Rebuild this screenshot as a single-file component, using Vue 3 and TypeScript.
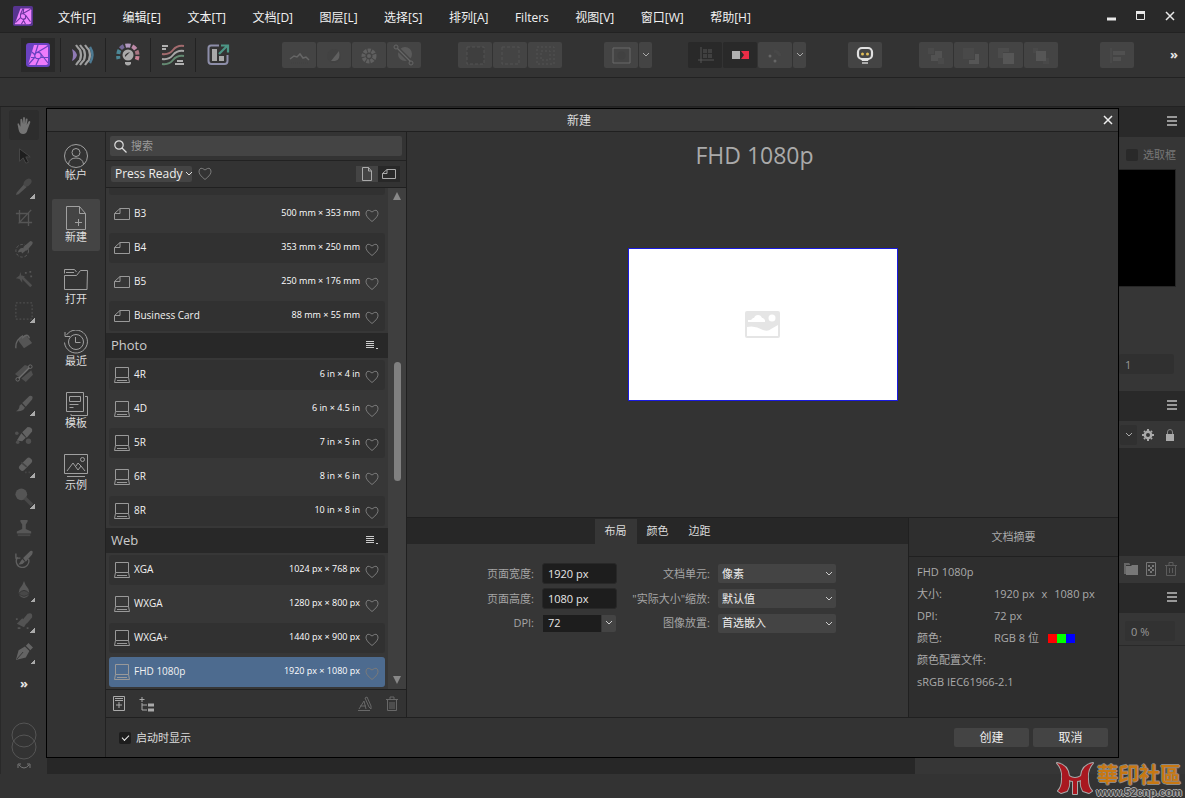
<script setup lang="ts">
import { ref } from 'vue'

interface Preset { name: string; size: string; shape: 'paper' | 'device' }
interface Section { title: string; items: Preset[] }

const menus = ['文件[F]', '编辑[E]', '文本[T]', '文档[D]', '图层[L]', '选择[S]', '排列[A]', 'Filters', '视图[V]', '窗口[W]', '帮助[H]']

const paper = (name: string, size: string): Preset => ({ name, size, shape: 'paper' })
const device = (name: string, size: string): Preset => ({ name, size, shape: 'device' })

const sections: Section[] = [
  { title: '', items: [paper('B3', '500 mm × 353 mm'), paper('B4', '353 mm × 250 mm'), paper('B5', '250 mm × 176 mm'), paper('Business Card', '88 mm × 55 mm')] },
  { title: 'Photo', items: [device('4R', '6 in × 4 in'), device('4D', '6 in × 4.5 in'), device('5R', '7 in × 5 in'), device('6R', '8 in × 6 in'), device('8R', '10 in × 8 in')] },
  { title: 'Web', items: [device('XGA', '1024 px × 768 px'), device('WXGA', '1280 px × 800 px'), device('WXGA+', '1440 px × 900 px'), device('FHD 1080p', '1920 px × 1080 px')] },
]
const shaded = (s: number, i: number) => (s === 0 ? i % 2 === 1 : i % 2 === 0)
const selected = ref('FHD 1080p')
const showAtStart = ref(true)
const marquee = ref(false)
const search = ref('')
const pageWidth = ref('1920 px')
const pageHeight = ref('1080 px')
const dpi = ref('72')
const opacity = ref('0 %')
const level = ref('1')

const personas: string[] = [
  '<rect width="24" height="24" rx="3" fill="#6a42c1"/><path d="M8 2h12q2 0 2 2v16q0 2-2 2H2z" fill="#ee7bfb"/><g stroke="#6a42c1" stroke-width="1.200" fill="none"><circle cx="12" cy="12.500" r="3.200"/><path d="M9 11.500 12 2M11.500 9.300 22 3M15 11l7 9M14.500 14.500H22M13 15.500 10 22M9 14 2 22M9.500 14.500H5M6 9l3 3"/></g>',
  '<path d="M1 6q4 2 5 6-1 4-5 6 2-6 0-12" fill="#8f7ab5"/><g fill="none" stroke="#a0a0a0" stroke-width="2.200"><path d="M5 2q2 3 4 5 2 5 0 10-2 2-4 5M9 2q2 3 4 5 2 5 0 10-2 2-4 5M14 2q2 3 4 5 2 5 0 10-2 2-4 5"/></g><path d="M19 4q5 8 0 16" fill="none" stroke="#4d7b94" stroke-width="2.400"/>',
  '<g fill="none" stroke-width="4"><path d="M2.500 16a10 10 0 0 1-.3-3" stroke="#4c8796"/><path d="M2.300 11a10 10 0 0 1 1.200-4" stroke="#4c8796"/><path d="M4.500 5.600a10 10 0 0 1 3.300-2.500" stroke="#766a99"/><path d="M9.500 2.800a10 10 0 0 1 5 0" stroke="#b39ac0"/><path d="M16.200 3.300a10 10 0 0 1 3.500 3" stroke="#be8aa8"/><path d="M20.500 7.600a10 10 0 0 1 1 4" stroke="#a97683"/><path d="M21.500 13.200a10 10 0 0 1-.8 3.500" stroke="#c98295"/></g><circle cx="12" cy="12" r="5.500" fill="#aaa"/><path d="M9 14q-1-3 5-5z" fill="#333"/><path d="M9 19h6v2q-3 3-6 0z" fill="#aaa"/>',
  '<g fill="none" stroke-width="2"><path d="M1 3h6M1 6h4M16 18h6M14 21h9" stroke="#b0b0b0"/><path d="M1 11q7 1 11-4 4-5 11-4" stroke="#a36b6e"/><path d="M1 16q7 1 11-4 4-5 11-4" stroke="#a8a8a8"/><path d="M1 21q7 1 11-4 4-5 11-4" stroke="#648a72"/></g>',
  '<path d="M13 2.500H5q-2.500 0-2.500 2.500v13q0 3 3 3h13q3 0 3-3v-6" fill="none" stroke="#8d8ea9" stroke-width="2"/><path d="M6 6h5v12H6zM13 13h5v5h-5z" fill="#a8a8a8"/><path d="m13 11 8-8M15 2.500h7v7" fill="none" stroke="#4c9585" stroke-width="2.200"/>',
]

const tools: { art: string; more?: boolean }[] = [
  { art: '<path d="M3 10q-1-2 1-2l2 4V4q1-2 2 0l1 5V2q1-2 2 0v7l1-6q2-1 2 1l-1 6 2-4q2-1 2 1l-3 8q-1 5-5 5-4 0-5-5z" fill="#747474"/>' },
  { art: '<path d="M5 2v14l4-4 3 6 3-1-3-6h5z" fill="#1e1e1e" stroke="#484848"/>' },
  { art: '<path d="m2 16 8-9 3 3-9 8-3 1z" fill="#555"/><ellipse cx="14" cy="5" rx="5" ry="3.500" transform="rotate(-45 14 5)" fill="#484848"/>', more: true },
  { art: '<path d="M5 1v14h14M1 5h14v14M4 16 18 1" stroke="#555" fill="none" stroke-width="1.500"/>' },
  { art: '<circle cx="8" cy="12" r="7" fill="none" stroke="#606060" stroke-dasharray="3 2"/><path d="m7 13-4 1q2-6 6-5l5 1-6 5zM9 8l8-7q4 0 2 4l-6 7z" fill="#5a5a5a"/>' },
  { art: '<path d="m7 6 11 11" stroke="#505050" stroke-width="3"/><path d="M6 1l1 4 4 1-3 3v4L5 9 1 8l4-3z" fill="#505050"/><path d="M11 2h2M16 1h2M17 6h2" stroke="#555" stroke-width="2"/>' },
  { art: '<path d="M1 1h18v18H1z" fill="none" stroke="#585858" stroke-dasharray="2 2"/>', more: true },
  { art: '<path d="m5 6 7-4 7 9-9 6-6-8z" fill="#555"/><path d="M1 17Q0 8 9 3M8 6q6-7 8 0" fill="none" stroke="#646464" stroke-width="1.500"/>' },
  { art: '<path d="m0 11 11-10 6 2-12 12zM7 16l11-9 2 5-8 8z" fill="#4f4f4f"/><path d="M4 16 17 3" stroke="#707070" stroke-width="1.500"/><g fill="#333" stroke="#707070"><circle cx="3" cy="17" r="2"/><circle cx="17" cy="3" r="2"/></g>' },
  { art: '<path d="m8 9 8-8q5-1 3 4l-7 8zM7 10l4 4q-2 5-10 4 4-2 4-6z" fill="#5b5b5b"/>', more: true },
  { art: '<path d="m8 7 6-6q6 0 5 5l-6 7zM7 8l5 5-4 4-6-1z" fill="#626262"/><g fill="#505050"><circle cx="2" cy="8" r="2"/><circle cx="3" cy="18" r="2"/><circle cx="15" cy="17" r="3"/></g>' },
  { art: '<rect x="3" y="5" width="17" height="7" rx="3" transform="rotate(-45 11 8)" fill="#606060"/><path d="m7 6 6 5M11 17h2M15 17h2" stroke="#444" stroke-width="2"/>', more: true },
  { art: '<circle cx="7" cy="7" r="6.500" fill="#555"/><path d="m11 11 8 8" stroke="#484848" stroke-width="4"/>', more: true },
  { art: '<path d="M6 1h8v2l-2 3v5l6 3v2H2v-2l6-3V6L6 3z" fill="#575757"/><path d="M3 18h14" stroke="#484848" stroke-width="2"/>' },
  { art: '<path d="M3 8a7 7 0 1 0 12 2M1 4v5h5" stroke="#606060" fill="none" stroke-width="1.500"/><path d="m9 9 8-8q4-1 2 4l-7 8zM8 10l3 3q-3 4-7 3z" fill="#606060"/>' },
  { art: '<path d="M10 0q-1 4-5 9-3 9 5 10 8-1 5-10-4-5-5-9" fill="#585858"/><path d="M4 14q6-7 12 0-6 6-12 0" fill="#484848" stroke="#333"/>', more: true },
  { art: '<path d="m9 8 5-6q6-2 5 4l-6 7zM8 7l5 5-3 5-8-4z" fill="#535353"/><path d="M1 8h2M3 18h3M13 18h2" stroke="#555" stroke-width="2"/>', more: true },
  { art: '<path d="m1 19 3-11 7-4 5 5-4 7zM12 3l3-3 5 5-3 3z" fill="#646464"/><path d="m2 18 7-8" stroke="#333"/>', more: true },
]

const fx: { icons: string[]; near?: boolean; split?: number[]; dark?: number[] }[] = [
  { icons: [
    '<path d="M3 16l4-3 3 1 3-3 3 4 3-1 3 3" fill="none" stroke="#666" stroke-width="1.500"/><path d="M4 20h17" stroke="#404040" stroke-dasharray="1 1"/>',
    '<circle cx="12" cy="13" r="7" fill="#424242"/><path d="M9 18 17 8q2 9-4 10z" fill="#606060"/>',
    '<circle cx="12" cy="13" r="5.500" fill="none" stroke="#606060" stroke-width="4" stroke-dasharray="3 1"/><circle cx="12" cy="13" r="2" fill="#606060"/>',
    '<circle cx="13" cy="11" r="7" fill="#5a5a5a"/><path d="m5 5 14 14" stroke="#444" stroke-width="4"/><path d="m5 5 14 14" stroke="#666" stroke-width="1.300"/><circle cx="4" cy="4" r="2" fill="#444" stroke="#666"/><circle cx="19" cy="20" r="2" fill="#444" stroke="#666"/>'] },
  { near: true, icons: [
    '<path d="M4 4h17v17H4z" fill="#3f3f3f" stroke="#525252" stroke-dasharray="3 2"/>',
    '<path d="M4 4h17v17H4z" fill="none" stroke="#525252" stroke-dasharray="3 2"/>',
    '<path d="M4 4h17v17H4zM8 8h9v9H8z" fill="none" stroke="#525252" stroke-dasharray="2 2"/>'] },
  { split: [0], icons: ['<path d="M4 5h17v15H4z" fill="none" stroke="#686868"/><circle cx="12.500" cy="12.500" r="4" fill="#414141"/>'] },
  { near: true, split: [2], dark: [0, 1], icons: [
    '<path d="M8 4v16M5 17h16" stroke="#555" fill="none"/><path d="M10 6h9v9h-9z" fill="#404040"/><path d="M14.500 6v9M10 10.500h9" stroke="#2b2b2b"/>',
    '<path d="M4 8h8v8H4z" fill="#b0b0b0"/><path d="M13 8h8v8h-8l3-4z" fill="#e92d46"/>',
    '<g fill="#666"><circle cx="7" cy="13" r="1.500"/><circle cx="12" cy="18" r="1.500"/></g><path d="M11 8q5 1 6 5" stroke="#484848" fill="none" stroke-width="3"/>'] },
  { icons: ['<rect x="5" y="5" width="14" height="11" rx="4" fill="#444" stroke="#e1e1e1" stroke-width="2.200"/><path d="M8 16h8l-1 2H9z" fill="#e1e1e1"/><path d="M9 20h6" stroke="#aaa" stroke-width="2"/><g fill="#e0bd58"><circle cx="9.500" cy="11" r="1.500"/><circle cx="14.500" cy="11" r="1.500"/></g>'] },
  { near: true, icons: [
    '<path d="M4 5h6v6H4zM14 15h6v6h-6z" fill="#4a4a4a"/><path d="M11 8h7v7h-4v3H7v-6h4z" fill="#525252"/>',
    '<path d="M4 5h11v11H4z" fill="#494949"/><path d="M16 11h4v10H10v-4h6z" fill="#565656"/>',
    '<path d="M4 5h11v4H9v6H4z" fill="#4c4c4c"/><path d="M9 10h11v11H9z" fill="#565656"/>',
    '<path d="M4 5h5v5H4zM14 15h6v6h-6z" fill="#494949"/><path d="M7 8h10v10H7z" fill="#565656"/>'] },
  { icons: ['<path d="M6 5v15" stroke="#4e4e4e"/><path d="M8 8h12v4H8zM8 14h8v4H8z" fill="#505050"/>'] },
]

const nav: { label: string; art: string }[] = [
  { label: '帐户', art: '<circle cx="12" cy="12" r="11.500"/><circle cx="12" cy="8.500" r="4"/><path d="M4.500 20q1-6 7.500-6t7.500 6"/>' },
  { label: '新建', art: '<path d="M2.500.5h13l6 7v16h-19zM15.500.5v7h6M14.500 13v7M11 16.500h7"/>' },
  { label: '打开', art: '<path d="M.5 21.500V7.500h12l4-5h7l-.5 19zM.5 5.500v-4h10l2 2.500M2 4.500h8"/>' },
  { label: '最近', art: '<path d="M2.500 5A11.500 11.500 0 1 1 .5 12.500M1 2v4.500h5"/><circle cx="12" cy="12" r="7.500"/><path d="M11.500 7v5.500h5"/>' },
  { label: '模板', art: '<path d="M2.500.5h17v19h-17zM5.500 4.500h11v5h-11zM5.500 12.500h9M5.500 15.500h4M21 4.500h2.500v19H7V22"/>' },
  { label: '示例', art: '<path d="M.5.500h23v19H.5zM3 17l6-8 5 7 3-4 4 5M3 22.500h18M12 12l2-3 3 3"/><circle cx="18.500" cy="5.500" r="2"/>' },
]
const tabs = ['布局', '颜色', '边距']
const activeTab = ref('布局')
</script>

<template>
  <div class="app">
    <header class="menubar">
      <svg class="logo" viewBox="0 0 24 24"><rect width="24" height="24" rx="2" fill="#57348f" /><path d="M9 3h11q2 0 2 2v14q0 3-3 3H2z" fill="#ef83ff" /><path d="M9 10l3-1 3 2v4l-3 1-3-2zM12 9l9-5M9 10l3-7M15 11l6 8M12 16l3 6M9 14l-6 6M14 15l-4 7M13 3l-1 6" fill="none" stroke="#6b36a0" stroke-width="1.300" /></svg>
      <nav class="menus"><button v-for="m in menus" :key="m">{{ m }}</button></nav>
      <div class="window-controls">
        <button aria-label="Minimize"><svg viewBox="0 0 10 10"><path d="M0 8h9" stroke-width="3" /></svg></button>
        <button aria-label="Maximize"><svg viewBox="0 0 10 10"><path d="M.5 1.500h8v7h-8zM0 1.500h9" stroke-width="1" /><path d="M0 1.500h9" stroke-width="3" /></svg></button>
        <button aria-label="Close"><svg viewBox="0 0 10 10"><path d="m1 1 8 8m0-8-8 8" stroke-width="1.500" /></svg></button>
      </div>
    </header>

    <div class="toolbar">
      <div class="personas">
        <button v-for="(p, i) in personas" :key="i" :class="{ on: i === 0 }" :aria-label="`Persona ${i + 1}`"><svg viewBox="0 0 24 24" v-html="p" /></button>
      </div>
      <div v-for="(g, gi) in fx" :key="gi" class="group" :class="{ near: g.near }">
        <template v-for="(ic, i) in g.icons" :key="i">
          <button class="tb" :class="{ dark: g.dark?.includes(i) }" :aria-label="`Command ${gi + 1}.${i + 1}`"><svg viewBox="0 0 24 24" v-html="ic" /></button>
          <button v-if="g.split?.includes(i)" class="tb drop" aria-label="Options"><svg viewBox="0 0 8 6"><path d="m1 1 3 3 3-3" /></svg></button>
        </template>
      </div>
      <button class="overflow">»</button>
    </div>
    <div class="context-bar"></div>

    <div class="workspace">
      <aside class="tools">
        <button v-for="(t, i) in tools" :key="i" :class="{ on: i === 0 }" :aria-label="`Tool ${i + 1}`">
          <svg viewBox="0 0 20 20" v-html="t.art" />
          <span v-if="t.more" class="corner"></span>
        </button>
        <button class="more">»</button>
        <svg class="swatches" viewBox="0 0 26 50"><g fill="none" stroke="#555"><circle cx="13" cy="13" r="12" /><circle cx="13" cy="25" r="12" /></g><path d="M8 43q5 6 10 0M7 46v-4h3M19 46v-4h-3" fill="none" stroke="#777" /></svg>
      </aside>
      <main class="canvas"></main>
      <aside class="panels">
        <div class="panel-head"><i></i></div>
        <label class="marquee"><input v-model="marquee" type="checkbox" />选取框</label>
        <div class="navigator"></div>
        <div class="level"><input v-model="level" aria-label="Level" /></div>
        <div class="panel-head"><i></i></div>
        <div class="layer-bar">
          <button class="blend" aria-label="Blend mode"><svg viewBox="0 0 8 6"><path d="m1 1 3 3 3-3" fill="none" stroke="#aaa" /></svg></button>
          <svg viewBox="0 0 12 12"><circle cx="6" cy="6" r="3.200" fill="none" stroke="#aaa" stroke-width="2.400" /><path d="M6 0v2M6 10v2M0 6h2M10 6h2M2 2l1 1M9 9l1 1M10 2 9 3M3 9l-1 1" stroke="#aaa" stroke-width="2" /></svg>
          <svg class="lock" viewBox="0 0 12 12"><path d="M2 5h8v7H2z" fill="#aaa" /><path d="M3.500 5V3q0-2.500 2.500-2.500T8.500 3v2" fill="none" stroke="#888" /></svg>
        </div>
        <div class="layers"></div>
        <div class="layer-actions">
          <svg viewBox="0 0 14 14"><path d="M0 1h5l1 1v1H2v9H0z" fill="#666" /><path d="M2 4h5l1-1h6v10H2z" fill="#777" /></svg>
          <svg viewBox="0 0 14 14"><path d="M2.500.5h9v13h-9z" fill="none" stroke="#777" /><path d="M4 3h2v2H4zM8 3h2v2H8zM6 5h2v2H6zM4 7h2v2H4zM8 7h2v2H8zM6 9h2v2H6z" fill="#777" /></svg>
          <svg viewBox="0 0 14 14"><path d="M2.500 3.500h9v10h-9zM1 3.500h12M5 3V.5h4V3M5.500 6v5M8.500 6v5" fill="none" stroke="#5c5c5c" /></svg>
        </div>
        <div class="panel-head"><i></i></div>
        <div class="opacity"><input v-model="opacity" aria-label="Opacity" /></div>
      </aside>

      <section class="dialog" role="dialog" aria-label="新建">
        <header class="dialog-head"><h1>新建</h1><button aria-label="Close dialog"><svg viewBox="0 0 10 10"><path d="m1 1 8 8m0-8-8 8" /></svg></button></header>
        <div class="dialog-body">
          <nav class="side-nav">
            <button v-for="(n, i) in nav" :key="n.label" :class="{ on: i === 1 }"><svg viewBox="0 0 24 24" v-html="n.art" />{{ n.label }}</button>
          </nav>
          <div class="dialog-main">
            <div class="upper">
              <div class="presets">
                <div class="search">
                  <label><svg viewBox="0 0 13 13"><circle cx="5" cy="5" r="4.200" /><path d="m8 8 4.500 4.500" /></svg><input v-model="search" placeholder="搜索" aria-label="搜索" /></label>
                </div>
                <div class="filters">
                  <button class="category">Press Ready<svg viewBox="0 0 8 6"><path d="m1 1 3 3 3-3" /></svg></button>
                  <svg class="heart" viewBox="0 0 14 14"><path d="M7 12.500Q.5 7.500 1 4 2-1 7 3q5-4 6 1 .5 3.500-6 8.500z" /></svg>
                  <div class="orient">
                    <button aria-label="Portrait"><svg viewBox="0 0 14 14"><path d="M2.500.5h6l3 3.500v9.500h-9zM8.500.5V4h3" /></svg></button>
                    <button class="on" aria-label="Landscape"><svg viewBox="0 0 14 14"><path d="M.5 6.500 5 2.500h8.500v9H.5zM.5 6.500H5v-4" /></svg></button>
                  </div>
                </div>
                <div class="list-wrap">
                  <div class="list">
                    <div class="row shade" aria-hidden="true"></div>
                    <template v-for="(s, si) in sections" :key="si">
                      <h2 v-if="s.title">{{ s.title }}<svg viewBox="0 0 14 10"><path d="M1 1.500h8M1 3.500h8M1 5.500h8M1 7.500h8M11 8.500h2" /></svg></h2>
                      <button v-for="(p, i) in s.items" :key="p.name" class="row" :class="{ shade: shaded(si, i), selected: p.name === selected }" @click="selected = p.name">
                        <svg v-if="p.shape === 'paper'" class="shape" viewBox="0 0 16 16"><path d="M.5 7.500 6 2.500h9.500v11H.5zM.5 7.500H6v-5" /></svg>
                        <svg v-else class="shape" viewBox="0 0 16 16"><path d="M1.500.5h13v10h-13zM1.500 10.500l-1 5h15l-1-5M3 13.500h10" /></svg>
                        <span class="name">{{ p.name }}</span><span class="size">{{ p.size }}</span>
                        <svg class="heart" viewBox="0 0 14 14"><path d="M7 12.500Q.5 7.500 1 4 2-1 7 3q5-4 6 1 .5 3.500-6 8.500z" /></svg>
                      </button>
                    </template>
                  </div>
                  <div class="scrollbar">
                    <svg viewBox="0 0 8 8"><path d="M4 0 8 8H0z" /></svg>
                    <div class="before"></div><div class="thumb"></div><div class="after"></div>
                    <svg viewBox="0 0 8 8"><path d="M0 0h8L4 8z" /></svg>
                  </div>
                </div>
                <div class="preset-actions">
                  <button aria-label="Add preset"><svg viewBox="0 0 16 16"><path d="M2.500.5h11v14h-11zM4 2.500h8M8 6v6M5 9h6M4 4.500h8" /></svg></button>
                  <button aria-label="Add category"><svg viewBox="0 0 16 16"><path d="M3 1v5M.5 3.500h5M3 7v7h5M3 9h5" /><path d="M9 9h6M9 14h6" stroke-width="3" /></svg></button>
                  <button class="push dim" aria-label="Rename"><svg viewBox="0 0 16 16"><path d="m3 13 5-8 2 8M4 10h6M2 14.500h12M9 2l2-1 4 9v3l-2-2z" /></svg></button>
                  <button class="dim" aria-label="Delete"><svg viewBox="0 0 16 16"><path d="M3.500 3.500h9v11h-9zM2 3.500h12M6 3V1h4v2M6 6v7M8 6v7M10 6v7" /></svg></button>
                </div>
              </div>

              <div class="detail">
                <div class="preview">
                  <h2>{{ selected }}</h2>
                  <div class="page"><svg viewBox="0 0 35 27"><rect width="35" height="27" rx="2" fill="#e5e5e5" /><path d="M3 11V9h3l2-2h1q1-3 4-3t4 3h1l2 2v2zM2 16q8-2 16 3 5 2 8-1l7-4v11H2z" fill="#fff" /><circle cx="27" cy="7" r="3.500" fill="#fff" /></svg></div>
                </div>
                <div class="settings">
                  <div class="form-side">
                    <div class="tabs" role="tablist"><button v-for="t in tabs" :key="t" role="tab" :class="{ on: t === activeTab }" @click="activeTab = t">{{ t }}</button></div>
                    <form class="form" @submit.prevent>
                      <label for="w">页面宽度:</label><input id="w" v-model="pageWidth" />
                      <label for="unit">文档单元:</label><div class="select"><select id="unit"><option>像素</option></select><svg viewBox="0 0 8 6"><path d="m1 1 3 3 3-3" /></svg></div>
                      <label for="h">页面高度:</label><input id="h" v-model="pageHeight" />
                      <label for="zoom">"实际大小"缩放:</label><div class="select"><select id="zoom"><option>默认值</option></select><svg viewBox="0 0 8 6"><path d="m1 1 3 3 3-3" /></svg></div>
                      <label for="dpi">DPI:</label><div class="combo"><input id="dpi" v-model="dpi" /><button type="button" aria-label="DPI values"><svg viewBox="0 0 8 6"><path d="m1 1 3 3 3-3" /></svg></button></div>
                      <label for="place">图像放置:</label><div class="select"><select id="place"><option>首选嵌入</option></select><svg viewBox="0 0 8 6"><path d="m1 1 3 3 3-3" /></svg></div>
                    </form>
                  </div>
                  <div class="summary">
                    <h3>文档摘要</h3>
                    <dl>
                      <dt class="full">{{ selected }}</dt>
                      <dt>大小:</dt><dd class="dims"><span>1920 px</span><span>x</span><span>1080 px</span></dd>
                      <dt>DPI:</dt><dd>72 px</dd>
                      <dt>颜色:</dt><dd>RGB 8 位<span class="rgb"><i></i><i></i><i></i></span></dd>
                      <dt class="full">颜色配置文件:</dt>
                      <dd class="full">sRGB IEC61966-2.1</dd>
                    </dl>
                  </div>
                </div>
              </div>
            </div>
            <footer class="dialog-foot">
              <label><input v-model="showAtStart" type="checkbox" />启动时显示</label>
              <button class="primary">创建</button><button>取消</button>
            </footer>
          </div>
        </div>
      </section>
    </div>
    <div class="status"></div>

    <div class="watermark">
      <svg viewBox="0 0 38 36"><path id="mark" d="M1 2q11 2 12 13 6 4 12 0Q26 4 37 2q-6 6-5 16 0 8 4 12l-3 2-6-2q-3-5-2-11-2 1-4 1v13h-4V20q-2 0-4-1 1 6-2 11l-6 2-3-2q4-4 4-12Q7 8 1 2z" fill="#a91820" stroke="#a9a9a9" stroke-width="2" stroke-linejoin="round" paint-order="stroke" /></svg>
      <div><strong>華印社區</strong><span>www.52cnp.com</span></div>
    </div>
  </div>
</template>

<style>
body { margin: 0; background: #363636; }
</style>

<style scoped>
.app { position: relative; box-sizing: border-box; height: 100vh; min-height: 760px; display: flex; flex-direction: column; overflow: hidden; background: #363636; color: #e6e6e6; font: 11px/16px "Open Sans", "Noto Sans CJK SC", sans-serif; }
.app *, .app :deep(*) { box-sizing: border-box; }
button, input, select { font: inherit; color: inherit; background: none; border: 0; padding: 0; margin: 0; border-radius: 0; }
svg { display: block; flex: none; }
h1, h2, h3, dl, dd { margin: 0; font-weight: 400; }

.menubar { flex: none; display: flex; align-items: center; height: 33px; background: #292929; border-bottom: 1px solid #222; padding: 0 9px 0 13px; }
.logo { width: 20px; height: 20px; }
.menus { display: flex; justify-content: space-between; width: 719px; margin-left: 12px; font-size: 12px; line-height: 18px; color: #f2f2f2; }
.menus button { padding: 4px 13px 0; white-space: nowrap; }
.window-controls { margin-left: auto; display: flex; gap: 18px; align-items: center; }
.window-controls button { width: 11px; height: 14px; }
.window-controls svg { width: 10px; height: 10px; stroke: #e8e8e8; fill: none; }

.toolbar { flex: none; display: flex; align-items: center; height: 45px; background: #333; border-bottom: 1px solid #222; padding: 0 7px 0 16px; }
.personas { display: flex; }
.personas button { width: 45px; height: 34px; display: flex; align-items: center; padding-left: 10px; border-right: 1px solid #222; }
.personas button:last-child { border: 0; }
.personas button.on { background: linear-gradient(#292929, #292929) 5px 0 / 34px 34px no-repeat; }
.personas svg { width: 24px; height: 24px; }
.group { display: flex; gap: 1px; margin-left: 42px; }
.group.near { margin-left: 37px; }
.group:nth-child(2) { margin-left: 41px; }
.group:nth-child(5) { margin-left: 36px; }
.tb { width: 34px; height: 26px; border-radius: 2px; background: #444; display: grid; place-items: center; }
.tb svg { width: 24px; height: 24px; }
.tb.dark { background: #292929; }
.tb.drop { width: 13px; }
.tb.drop svg { width: 8px; height: 6px; fill: none; stroke: #aaa; }
.overflow { margin-left: auto; padding-bottom: 2px; font-size: 13px; font-weight: 700; }
.context-bar { flex: none; height: 29px; background: #333; border-bottom: 1px solid #222; }

.workspace { position: relative; flex: 1; min-height: 0; display: flex; background: #272727; }
.tools { width: 47px; flex: none; background: #333; border-left: 1px solid #292929; display: flex; flex-direction: column; align-items: center; gap: 1px; padding-top: 3px; }
.tools button { position: relative; width: 30px; height: 30px; flex: none; display: grid; place-items: center; border-radius: 3px; }
.tools button.on { background: #2d2d2d; }
.tools button svg { width: 18px; height: 18px; }
.corner { position: absolute; right: 4px; bottom: 3px; width: 5px; height: 5px; background: linear-gradient(135deg, transparent 50%, #aaa 50%); }
.tools .more { font-size: 13px; font-weight: 700; }
.swatches { width: 26px; height: 50px; margin-top: 23px; }
.canvas { flex: 1; background: #272727; }

.panels { width: 270px; flex: none; background: #363636; display: flex; flex-direction: column; color: #777; }
.panel-head { height: 30px; flex: none; background: #292929; display: flex; justify-content: flex-end; align-items: center; padding: 0 8px 2px 0; }
.panel-head i { width: 10px; height: 10px; border-top: 2px solid #999; border-bottom: 2px solid #999; background: linear-gradient(#999, #999) 0 2px / 10px 2px no-repeat; }
.marquee { height: 32px; flex: none; display: flex; align-items: center; justify-content: flex-end; padding: 4px 9px 0; gap: 5px; }
.marquee input { appearance: none; width: 12px; height: 12px; border-radius: 2px; background: #292929; }
.navigator { height: 118px; flex: none; background: #000; border: 1px solid #262626; margin-right: 9px; }
.level { height: 104px; flex: none; padding: 67px 11px 0 0; display: flex; justify-content: flex-end; align-items: flex-start; }
.level input { width: 55px; height: 20px; background: #303030; border-radius: 3px; padding-left: 6px; color: #999; }
.layer-bar { height: 28px; flex: none; display: flex; align-items: center; justify-content: flex-end; gap: 5px; padding-right: 9px; border-bottom: 1px solid #292929; }
.layer-bar > svg { width: 12px; height: 12px; }
.layer-bar .lock { margin-left: 5px; }
.layer-bar .blend { width: 17px; height: 20px; background: #303030; display: grid; place-items: center; border-radius: 2px; }
.layer-bar .blend svg { width: 8px; height: 6px; }
.layers { height: 107px; flex: none; background: #292929; }
.layer-actions { height: 27px; flex: none; display: flex; justify-content: flex-end; align-items: center; gap: 6px; padding: 0 7px 2px 0; }
.layer-actions svg { width: 14px; height: 14px; }
.opacity { height: 33px; flex: none; display: flex; justify-content: flex-end; align-items: center; padding: 4px 10px 0 0; border-bottom: 1px solid #292929; }
.opacity input { width: 50px; height: 20px; background: #323232; border-radius: 3px; padding-left: 6px; color: #999; }
.status { height: 24px; flex: none; background: #333; }

.dialog { position: absolute; inset: 1px 66px 16px 46px; border: 1px solid #000; background: #333; display: flex; flex-direction: column; }
.dialog-head { flex: none; height: 23px; display: flex; align-items: center; background: #3a3a3a; border-bottom: 1px solid #202020; padding-right: 5px; }
.dialog-head h1 { flex: 1; text-align: center; font-size: 12px; line-height: 18px; padding: 2px 0 0 8px; color: #ddd; }
.dialog-head button { width: 10px; height: 10px; }
.dialog-head svg { width: 10px; height: 10px; stroke: #eee; stroke-width: 1.5; fill: none; }
.dialog-body { flex: 1; min-height: 0; display: flex; }
.side-nav { width: 59px; flex: none; border-right: 1px solid #222; display: flex; flex-direction: column; align-items: center; gap: 10px; padding-top: 5px; }
.side-nav button { width: 48px; height: 52px; border-radius: 2px; display: flex; flex-direction: column; align-items: center; justify-content: center; line-height: 14px; color: #ddd; }
.side-nav button.on { background: #444; }
.side-nav svg { width: 24px; height: 24px; fill: none; stroke: #a0a0a0; stroke-width: 1; }
.dialog-main { flex: 1; min-width: 0; display: flex; flex-direction: column; }
.upper { flex: 1; min-height: 0; display: flex; }
.presets { width: 301px; flex: none; border-right: 1px solid #202020; display: flex; flex-direction: column; }
.search { flex: none; height: 29px; padding: 4px 4px; border-bottom: 1px solid #222; }
.search label { height: 20px; background: #444; border-radius: 2px; display: flex; align-items: center; gap: 4px; padding-left: 4px; }
.search svg { width: 13px; height: 13px; fill: none; stroke: #ddd; stroke-width: 1.2; }
.search input { flex: 1; min-width: 0; outline: 0; }
.search input::placeholder { color: #999; opacity: 1; }
.filters { flex: none; height: 27px; display: flex; align-items: center; padding: 0 6px 0 5px; border-bottom: 1px solid #202020; }
.category { display: flex; align-items: center; gap: 2px; height: 16px; width: 81px; padding-left: 4px; background: #444; border-radius: 2px; font-size: 12px; color: #eee; white-space: nowrap; }
.category svg { width: 8px; height: 6px; fill: none; stroke: #ddd; }
.heart { width: 14px; height: 14px; fill: none; stroke: #7a7a7a; }
.filters .heart { margin-left: 6px; }
.orient { margin-left: auto; display: flex; }
.orient button { width: 22px; height: 16px; display: grid; place-items: center; background: #444; }
.orient button.on { background: #282828; }
.orient svg { width: 14px; height: 14px; fill: none; stroke: #aaa; }
.list-wrap { flex: 1; min-height: 0; display: flex; background: #373737; }
.list { flex: 1; min-width: 0; overflow: hidden; display: flex; flex-direction: column; justify-content: flex-end; }
.list h2 { flex: none; height: 25px; display: flex; align-items: center; justify-content: space-between; padding: 0 9px 2px 5px; background: #282828; font-size: 13px; color: #ccc; }
.list h2 svg { width: 14px; height: 10px; stroke: #ccc; }
.row { flex: none; height: 30px; margin: 2px 3px; padding: 0 6px 0 5px; border-radius: 3px; display: flex; align-items: center; text-align: left; color: #f2f2f2; font-size: 10px; }
.row.shade { background: #313131; }
.row.selected { background: #4d6b8f; }
.row .shape { width: 16px; height: 16px; margin-right: 4px; fill: none; stroke: #999; }
.row .name { flex: 1; padding-bottom: 2px; }
.row .size { padding-bottom: 2px; font-size: 9px; color: #fff; }
.row .heart { margin: 3px 0 0 5px; }
.scrollbar { width: 18px; flex: none; background: #3f3f3f; display: flex; flex-direction: column; align-items: center; padding: 4px 0 5px; }
.scrollbar svg { width: 8px; height: 8px; fill: #888; }
.thumb { flex: 119; width: 7px; border-radius: 4px; background: #808080; }
.before { flex: 162; }
.after { flex: 195; }
.preset-actions { flex: none; height: 28px; border-top: 1px solid #202020; display: flex; align-items: center; gap: 12px; padding: 0 6px 0 5px; }
.preset-actions button { width: 16px; height: 16px; }
.preset-actions svg { width: 16px; height: 16px; fill: none; stroke: #aaa; }
.preset-actions .push { margin-left: auto; }
.preset-actions .dim svg { stroke: #686868; }

.detail { flex: 1; min-width: 0; display: flex; flex-direction: column; }
.preview { flex: 1; min-height: 0; display: flex; flex-direction: column; align-items: center; }
.preview h2 { font-size: 23px; line-height: 32px; padding: 7px 16px 0 0; color: #aaa; }
.page { width: 270px; height: 153px; margin-top: 77px; background: #fff; border: 1px solid #1a1ae0; display: grid; place-items: center; }
.page svg { width: 35px; height: 27px; }
.settings { flex: none; height: 200px; display: flex; border-top: 1px solid #202020; }
.form-side { flex: 1; min-width: 0; background: #363636; }
.tabs { height: 26px; background: #272727; display: flex; justify-content: center; padding-top: 1px; }
.tabs button { width: 42px; height: 25px; padding-bottom: 2px; color: #ddd; }
.tabs button.on { background: #363636; }
.form { display: grid; grid-template-columns: 80px 75px 85px 118px; justify-content: center; align-items: center; gap: 4px 8px; grid-template-rows: 21px 21px 20px; padding: 19px 25px 0 0; }
.form label { text-align: right; color: #a5a5a5; white-space: nowrap; }
.form > input { width: 75px; height: 21px; border: 1px solid #282828; background: #1d1d1d; border-radius: 3px; padding-left: 5px; }
.combo { display: flex; height: 17px; gap: 1px; padding: 0 1px; }
.combo input { flex: 1; min-width: 0; background: #1d1d1d; padding-left: 5px; }
.combo button { width: 14px; background: #444; display: grid; place-items: center; border-radius: 0 2px 2px 0; }
.select { position: relative; height: 19px; }
.select select { appearance: none; width: 100%; height: 100%; background: #444; border-radius: 2px; padding-left: 4px; color: #eee; }
.select svg { position: absolute; right: 3px; top: 7px; }
.select svg, .combo svg { width: 8px; height: 6px; fill: none; stroke: #ccc; }
.summary { width: 210px; flex: none; background: #2e2e2e; border-left: 1px solid #202020; color: #aaa; }
.summary h3 { height: 39px; font-size: 11px; line-height: 38px; text-align: center; border-bottom: 1px solid #202020; }
.summary dl { display: grid; grid-template-columns: 77px 1fr; padding: 4px 0 0 8px; line-height: 22px; white-space: nowrap; }
.summary dd { display: flex; align-items: center; }
.summary .dims { gap: 7px; }
.summary .full { grid-column: 1 / -1; }
.rgb { display: flex; margin-left: 9px; }
.rgb i { width: 9px; height: 9px; background: #f00; }
.rgb i:nth-child(2) { background: #0f0; }
.rgb i:nth-child(3) { background: #00f; }
.dialog-foot { flex: none; height: 40px; border-top: 1px solid #202020; display: flex; align-items: center; gap: 4px; padding: 0 10px 0 13px; }
.dialog-foot label { flex: 1; display: flex; align-items: center; gap: 5px; color: #ddd; }
.dialog-foot input { appearance: none; width: 12px; height: 12px; border-radius: 2px; background: #1d1d1d; display: grid; place-items: center; }
.dialog-foot input:checked::after { content: ""; width: 6px; height: 3px; border: solid #eee; border-width: 0 0 1px 1px; transform: rotate(-45deg); margin-bottom: 2px; }
.dialog-foot button { width: 75px; height: 19px; border-radius: 2px; background: #444; font-size: 12px; color: #eee; }

.watermark { position: absolute; right: 3px; bottom: 0; display: flex; align-items: center; gap: 2px; }
.watermark svg { width: 38px; height: 36px; }
.watermark div { display: flex; flex-direction: column; align-items: center; }
.watermark strong { font: 700 21px/26px "Noto Sans CJK TC", sans-serif; color: #c87812; text-shadow: 1px 0 #888, -1px 0 #888, 0 1px #888, 0 -1px #888; }
.watermark span { font: 700 11px/12px "Liberation Sans", sans-serif; color: #444; text-shadow: 1px 0 #aaa, -1px 0 #aaa, 0 1px #aaa, 0 -1px #aaa; }
</style>
